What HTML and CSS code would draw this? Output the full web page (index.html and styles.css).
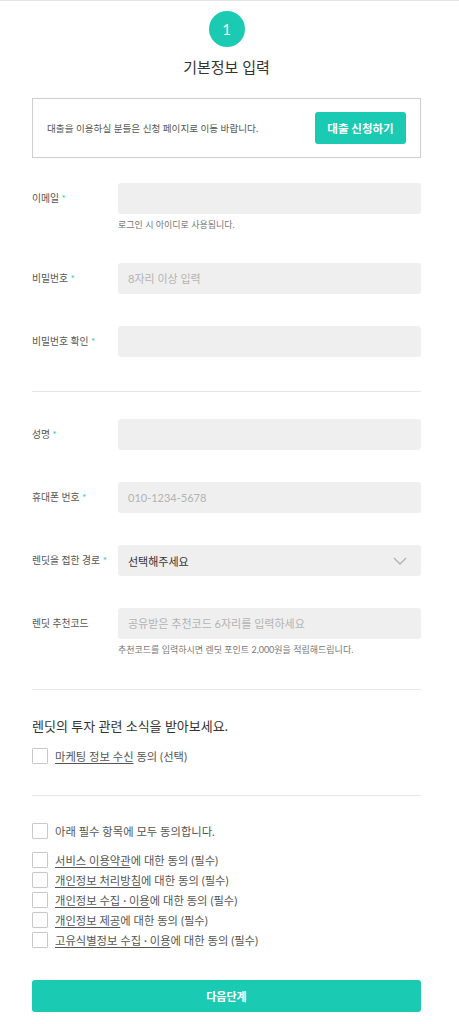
FILE: index.html
```html
<!DOCTYPE html>
<html lang="ko">
<head>
<meta charset="utf-8">
<title>기본정보 입력</title>
<link rel="stylesheet" href="styles.css">
</head>
<body>
<div class="top-line"></div>
<main class="page">
  <header class="step">
    <div class="step-num">1</div>
    <h1 class="step-title">기본정보 입력</h1>
  </header>

  <div class="notice">
    <p class="notice-text">대출을 이용하실 분들은 신청 페이지로 이동 바랍니다.</p>
    <a class="btn-apply">대출 신청하기</a>
  </div>

  <section class="fields first">
    <div class="field">
      <label class="label">이메일 <span class="req">*</span></label>
      <div class="control">
        <input class="input" type="text">
        <p class="hint">로그인 시 아이디로 사용됩니다.</p>
      </div>
    </div>
    <div class="field">
      <label class="label">비밀번호 <span class="req">*</span></label>
      <div class="control">
        <input class="input" type="password" placeholder="8자리 이상 입력">
      </div>
    </div>
    <div class="field">
      <label class="label">비밀번호 확인 <span class="req">*</span></label>
      <div class="control">
        <input class="input" type="password">
      </div>
    </div>
  </section>

  <hr class="divider d1">

  <section class="fields">
    <div class="field">
      <label class="label">성명 <span class="req">*</span></label>
      <div class="control">
        <input class="input" type="text">
      </div>
    </div>
    <div class="field">
      <label class="label">휴대폰 번호 <span class="req">*</span></label>
      <div class="control">
        <input class="input" type="text" placeholder="010-1234-5678">
      </div>
    </div>
    <div class="field">
      <label class="label">렌딧을 접한 경로 <span class="req">*</span></label>
      <div class="control">
        <div class="select">
          <span class="select-text">선택해주세요</span>
          <svg class="chevron" width="14" height="8" viewBox="0 0 14 8"><path d="M1 1 L7 7 L13 1" fill="none" stroke="#b3b3b3" stroke-width="1.4"/></svg>
        </div>
      </div>
    </div>
    <div class="field">
      <label class="label">렌딧 추천코드</label>
      <div class="control">
        <input class="input" type="text" placeholder="공유받은 추천코드 6자리를 입력하세요">
        <p class="hint">추천코드를 입력하시면 렌딧 포인트 2,000원을 적립해드립니다.</p>
      </div>
    </div>
  </section>

  <hr class="divider d2">

  <h2 class="news-title">렌딧의 투자 관련 소식을 받아보세요.</h2>
  <div class="check-row marketing">
    <span class="box"></span>
    <span class="check-text"><span class="link">마케팅 정보 수신</span> 동의 (선택)</span>
  </div>

  <hr class="divider d3">

  <div class="check-row all">
    <span class="box"></span>
    <span class="check-text">아래 필수 항목에 모두 동의합니다.</span>
  </div>
  <div class="terms">
    <div class="check-row">
      <span class="box"></span>
      <span class="check-text"><span class="link">서비스 이용약관</span>에 대한 동의 (필수)</span>
    </div>
    <div class="check-row">
      <span class="box"></span>
      <span class="check-text"><span class="link">개인정보 처리방침</span>에 대한 동의 (필수)</span>
    </div>
    <div class="check-row">
      <span class="box"></span>
      <span class="check-text"><span class="link">개인정보 수집 · 이용</span>에 대한 동의 (필수)</span>
    </div>
    <div class="check-row">
      <span class="box"></span>
      <span class="check-text"><span class="link">개인정보 제공</span>에 대한 동의 (필수)</span>
    </div>
    <div class="check-row">
      <span class="box"></span>
      <span class="check-text"><span class="link">고유식별정보 수집 · 이용</span>에 대한 동의 (필수)</span>
    </div>
  </div>

  <button class="btn-next">다음단계</button>
</main>
</body>
</html>
```

FILE: styles.css
```css
* { box-sizing: border-box; }

html, body {
  margin: 0;
  padding: 0;
  background: #fff;
}

body {
  font-family: Lato, "Noto Sans CJK KR", sans-serif;
  color: #444;
}

.top-line {
  height: 1px;
  background: #e3e3e3;
}

.page {
  padding: 0 38px 0 32px;
}

.step {
  display: flex;
  flex-direction: column;
  align-items: center;
}

.step-num {
  margin-top: 10px;
  width: 36px;
  height: 36px;
  border-radius: 50%;
  background: #1bcab2;
  color: #fff;
  font-size: 15px;
  line-height: 36px;
  text-align: center;
}

.step-title {
  margin: 9px 0 0;
  font-size: 15px;
  font-weight: 400;
  line-height: 22px;
  color: #333;
}

.notice {
  margin-top: 20px;
  height: 60px;
  border: 1px solid #cfcfcf;
  display: flex;
  align-items: center;
  justify-content: space-between;
  padding: 0 14px;
}

.notice-text {
  margin: 0;
  font-size: 9.6px;
  color: #555;
}

.btn-apply {
  width: 91px;
  height: 32px;
  border-radius: 3px;
  background: #1bcab2;
  color: #fff;
  font-size: 11.5px;
  font-weight: 700;
  display: flex;
  align-items: center;
  justify-content: center;
}

.fields {
  display: flex;
  flex-direction: column;
  gap: 32px;
}

.fields.first {
  margin-top: 25px;
}

.field {
  display: grid;
  grid-template-columns: 86px 1fr;
  align-items: start;
}

.label {
  font-size: 9.8px;
  line-height: 31px;
  color: #555;
  white-space: nowrap;
}

.req {
  color: #1bcab2;
}

.input {
  display: block;
  width: 100%;
  height: 31px;
  border: 0;
  border-radius: 3px;
  background: #efefef;
  padding: 0 10px;
  font-family: Lato, "Noto Sans CJK KR", sans-serif;
  font-size: 11px;
  color: #333;
  outline: none;
}

.input::placeholder {
  color: #b3b3b3;
}

.hint {
  margin: 5px 0 0;
  font-size: 9px;
  line-height: 12px;
  color: #777;
}

.select {
  height: 31px;
  border-radius: 3px;
  background: #efefef;
  padding: 0 14px 0 10px;
  display: flex;
  align-items: center;
  justify-content: space-between;
}

.select-text {
  font-size: 11px;
  color: #333;
}

.divider {
  border: 0;
  height: 1px;
  background: #e6e6e6;
  margin: 0;
}

.divider.d1 { margin: 34px 0 27px; }
.divider.d2 { margin: 33px 0 0; }
.divider.d3 { margin: 29px 0 0; }

.news-title {
  margin: 26px 0 0;
  font-size: 13px;
  font-weight: 400;
  line-height: 20px;
  color: #333;
}

.check-row {
  display: flex;
  align-items: center;
  gap: 7px;
  height: 20px;
}

.check-row.marketing { margin-top: 10px; }
.check-row.all { margin-top: 25px; }

.terms {
  margin-top: 9px;
  display: flex;
  flex-direction: column;
}

.box {
  width: 16px;
  height: 16px;
  border: 1px solid #c9c9c9;
  border-radius: 1px;
  background: #fff;
  flex: none;
}

.check-text {
  font-size: 11.3px;
  color: #555;
  white-space: nowrap;
}

.link {
  text-decoration: underline;
  text-underline-offset: 2px;
}

.btn-next {
  display: block;
  margin-top: 30px;
  width: 100%;
  height: 32px;
  border: 0;
  border-radius: 3px;
  background: #1bcab2;
  color: #fff;
  font-family: Lato, "Noto Sans CJK KR", sans-serif;
  font-size: 11px;
  font-weight: 700;
}
```
